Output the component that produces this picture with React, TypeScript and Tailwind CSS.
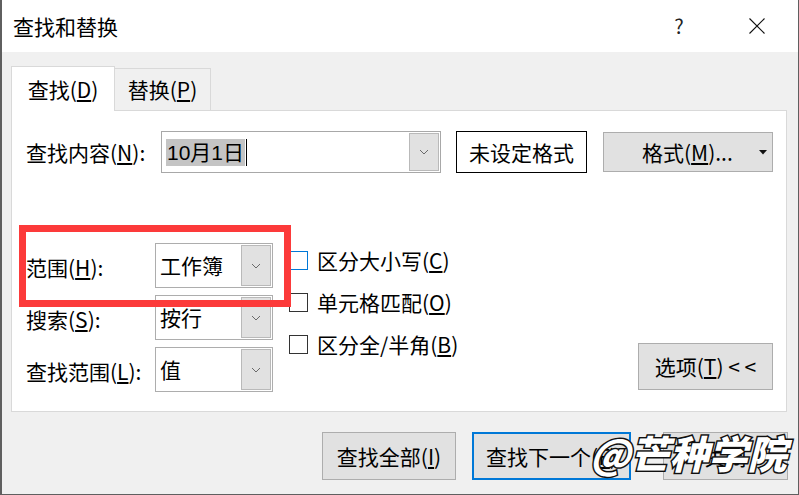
import React from "react";

const font = { fontFamily: '"Noto Sans CJK SC", "Microsoft YaHei", sans-serif' };

function Chevron() {
  return (
    <svg width="10" height="6" viewBox="0 0 10 6" className="block">
      <polyline points="1,1 5,5 9,1" fill="none" stroke="#6a6a6a" strokeWidth="1" />
    </svg>
  );
}

function DropButton() {
  return (
    <div className="absolute right-[1px] top-[1px] bottom-[1px] w-[30px] flex items-center justify-center bg-[#e1e1e1] border border-[#b9b9b9]">
      <Chevron />
    </div>
  );
}

function Select({ value }: { value: string }) {
  return (
    <div className="relative w-[118px] h-[45px] border border-[#adadad] bg-white flex items-center pl-[4px]">
      <span>{value}</span>
      <DropButton />
    </div>
  );
}

function Check({ label, k, focus }: { label: string; k: string; focus?: boolean }) {
  return (
    <div className="h-[42px] flex items-center">
      <div className={`w-[19px] h-[19px] border bg-white ${focus ? "border-[#0078d7]" : "border-[#333333]"}`} />
      <span className="ml-[9px]">
        {label}(<span className="underline underline-offset-2">{k}</span>)
      </span>
    </div>
  );
}

export default function App() {
  return (
    <div
      className="relative w-[799px] h-[495px] overflow-hidden flex flex-col border-l-2 border-r border-b border-[#5f5f5f] bg-[#f0f0f0] text-[21px] text-black leading-none"
      style={font}
    >
      {/* title bar */}
      <div className="h-[52px] bg-white flex items-center pl-[11px] shrink-0">
        <span className="text-[21px]">查找和替换</span>
        <span className="ml-auto w-[20px] text-center text-[20px] text-[#222]">?</span>
        <div className="ml-[60px] mr-[33px] w-[16px] h-[16px]">
          <svg width="16" height="16" viewBox="0 0 16 16" className="block">
            <path d="M0.5 0.5 L15.5 15.5 M15.5 0.5 L0.5 15.5" stroke="#111" strokeWidth="1.1" fill="none" />
          </svg>
        </div>
      </div>

      {/* body */}
      <div className="flex-1 pl-[9px] pr-[11px] pt-[14px]">
        {/* tabs */}
        <div className="flex items-end h-[44px]">
          <div className="relative z-10 w-[104px] h-[45px] -mb-[1px] bg-white border border-b-0 border-[#d9d9d9] flex items-center justify-center">
            <span>
              查找(<span className="underline underline-offset-2">D</span>)
            </span>
          </div>
          <div className="w-[96px] h-[42px] border-t border-r border-[#d9d9d9] flex items-center justify-center">
            <span>
              替换(<span className="underline underline-offset-2">P</span>)
            </span>
          </div>
        </div>

        {/* panel */}
        <div className="relative w-[776px] h-[302px] bg-white border border-[#d9d9d9] pl-[14px] pt-[20px]">
          <div className="flex items-center">
            <div className="w-[135px]">
              查找内容(<span className="underline underline-offset-2">N</span>):
            </div>
            <div className="relative w-[280px] h-[42px] border border-[#a8a8a8] flex items-center pl-[4px]">
              <span
                className="bg-[#c4c4c4] h-[27px] flex items-center px-[1px]"
                style={{ fontFamily: '"Liberation Sans", "Noto Sans CJK SC", sans-serif' }}
              >
                10月1日
              </span>
              <span className="w-[1px] h-[27px] bg-black ml-[1px]" />
              <DropButton />
            </div>
            <div className="ml-[15px] w-[131px] h-[42px] border border-black flex items-center justify-center">
              未设定格式
            </div>
            <div className="relative ml-[16px] w-[170px] h-[40px] bg-[#e1e1e1] border border-[#adadad] flex items-center pl-[38px]">
              <span>
                格式(<span className="underline underline-offset-2">M</span>)...
              </span>
              <svg width="8" height="5" viewBox="0 0 8 5" className="absolute right-[5px] top-[17px]">
                <polygon points="0,0 8,0 4,4.5" fill="#111" />
              </svg>
            </div>
          </div>

          <div className="flex mt-[70px]">
            <div className="flex flex-col gap-[7px]">
              {[
                ["范围", "H", "工作簿"],
                ["搜索", "S", "按行"],
                ["查找范围", "L", "值"],
              ].map(([l, k, v]) => (
                <div key={k} className="flex items-center">
                  <div className="w-[129px] pt-[3px]">
                    {l}(<span className="underline underline-offset-2">{k}</span>):
                  </div>
                  <Select value={v} />
                </div>
              ))}
            </div>
            <div className="ml-[16px] -mt-[4px] flex flex-col">
              <Check label="区分大小写" k="C" focus />
              <Check label="单元格匹配" k="O" />
              <Check label="区分全/半角" k="B" />
            </div>
            <div className="ml-auto mr-[13px] self-end mb-[2px] w-[135px] h-[47px] bg-[#e1e1e1] border border-[#adadad] flex items-center justify-center">
              <span>
                选项(<span className="underline underline-offset-2">T</span>) &lt; &lt;
              </span>
            </div>
          </div>
        </div>

        {/* buttons */}
        <div className="flex justify-end mt-[20px] -mr-[1px]">
          <div className="w-[134px] h-[48px] bg-[#e1e1e1] border border-[#adadad] flex items-center justify-center">
            <span>
              查找全部(<span className="underline underline-offset-2">I</span>)
            </span>
          </div>
          <div className="ml-[16px] w-[159px] h-[48px] bg-[#e1e1e1] border-2 border-[#0078d7] flex items-center justify-center">
            <span>
              查找下一个(<span className="underline underline-offset-2">F</span>)
            </span>
          </div>
          <div className="ml-[32px] w-[125px] h-[48px] bg-[#e1e1e1] border border-[#adadad] flex items-center justify-center">
            <span>关闭</span>
          </div>
        </div>
      </div>

      {/* red highlight box */}
      <div className="absolute left-[17px] top-[225px] w-[272px] h-[82px] border-[7px] border-[#fc3a3a]" />

      {/* watermark */}
      <div className="absolute left-[588px] top-[433px] text-[39px] font-black italic text-white leading-none tracking-[0px] [-webkit-text-stroke:3px_#111] [paint-order:stroke_fill]">
        @芒种学院
      </div>
    </div>
  );
}
